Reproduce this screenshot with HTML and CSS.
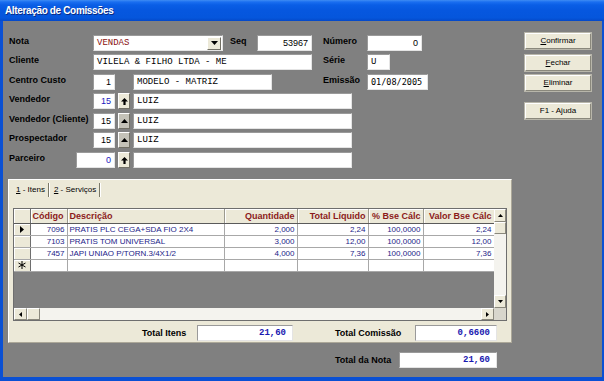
FILE: index.html
```html
<!DOCTYPE html>
<html>
<head>
<meta charset="utf-8">
<title>Alteração de Comissões</title>
<link rel="stylesheet" href="styles.css">
</head>
<body>
<div class="window">
  <div class="titlebar">Alteração de Comissões</div>
  <div class="client">
    <div class="top">
      <div class="fields">
        <div class="row">
          <span class="lbl w84">Nota</span>
          <div class="combo">
            <span class="ctext mono red">VENDAS</span>
            <span class="ddbtn"><svg width="7" height="4" viewBox="0 0 7 4"><path d="M0 0H7L3.5 4Z" fill="#000"/></svg></span>
          </div>
          <span class="lbl seqlbl">Seq</span>
          <div class="inp w55 right sans">53967</div>
          <span class="lbl rlbl">Número</span>
          <div class="inp w55 right sans">0</div>
        </div>
        <div class="row g3">
          <span class="lbl w84">Cliente</span>
          <div class="inp w219 mono">VILELA &amp; FILHO LTDA - ME</div>
          <span class="lbl rlbl">Série</span>
          <div class="inp w23 mono">U</div>
        </div>
        <div class="row g4">
          <span class="lbl w84">Centro Custo</span>
          <div class="inp w22 right sans">1</div>
          <div class="inp w139 mono ml18">MODELO - MATRIZ</div>
          <span class="lbl rlbl ml51">Emissão</span>
          <div class="inp w61 dmono">01/08/2005</div>
        </div>
        <div class="row g3">
          <span class="lbl w84">Vendedor</span>
          <div class="inp w22 right sans blue">15</div>
          <span class="sbtn"><svg width="7" height="7" viewBox="0 0 7 7"><path d="M3.5 0L7 3.5H4.6V7H2.4V3.5H0Z" fill="#000"/></svg></span>
          <div class="inp w219 mono">LUIZ</div>
        </div>
        <div class="row g4">
          <span class="lbl w84">Vendedor (Cliente)</span>
          <div class="inp w22 right sans">15</div>
          <span class="sbtn gray"><svg width="7" height="4" viewBox="0 0 7 4"><path d="M3.5 0L7 4H0Z" fill="#000"/></svg></span>
          <div class="inp w219 mono">LUIZ</div>
        </div>
        <div class="row g3">
          <span class="lbl w84">Prospectador</span>
          <div class="inp w22 right sans">15</div>
          <span class="sbtn gray"><svg width="7" height="4" viewBox="0 0 7 4"><path d="M3.5 0L7 4H0Z" fill="#000"/></svg></span>
          <div class="inp w219 mono">LUIZ</div>
        </div>
        <div class="row g4">
          <span class="lbl w67">Parceiro</span>
          <div class="inp w39 right sans blue">0</div>
          <span class="sbtn"><svg width="7" height="7" viewBox="0 0 7 7"><path d="M3.5 0L7 3.5H4.6V7H2.4V3.5H0Z" fill="#000"/></svg></span>
          <div class="inp w219 mono"></div>
        </div>
      </div>
      <div class="buttons">
        <button class="btn"><u>C</u>onfirmar</button>
        <button class="btn b2"><u>F</u>echar</button>
        <button class="btn b3"><u>E</u>liminar</button>
        <button class="btn b4">F1 - Ajuda</button>
      </div>
    </div>

    <div class="panel">
      <div class="tabs">
        <span class="tab"><u>1</u> - Itens</span>
        <span class="tab"><u>2</u> - Serviços</span>
      </div>
      <div class="dgrid">
        <div class="data">
          <table class="tbl">
            <colgroup>
              <col class="c0"><col class="c1"><col class="c2"><col class="c3"><col class="c4"><col class="c5"><col class="c6">
            </colgroup>
            <thead>
              <tr>
                <th class="ind"></th>
                <th class="l">Código</th>
                <th class="l">Descrição</th>
                <th>Quantidade</th>
                <th>Total Líquido</th>
                <th>% Bse Cálc</th>
                <th>Valor Bse Cálc</th>
              </tr>
            </thead>
            <tbody>
              <tr>
                <td class="ind"><svg width="4" height="7" viewBox="0 0 4 7"><path d="M0 0L4 3.5L0 7Z" fill="#000"/></svg></td>
                <td class="r">7096</td><td>PRATIS PLC CEGA+SDA FIO 2X4</td><td class="r">2,000</td><td class="r">2,24</td><td class="r">100,0000</td><td class="r">2,24</td>
              </tr>
              <tr>
                <td class="ind"></td>
                <td class="r">7103</td><td>PRATIS TOM UNIVERSAL</td><td class="r">3,000</td><td class="r">12,00</td><td class="r">100,0000</td><td class="r">12,00</td>
              </tr>
              <tr>
                <td class="ind"></td>
                <td class="r">7457</td><td>JAPI UNIAO P/TORN.3/4X1/2</td><td class="r">4,000</td><td class="r">7,36</td><td class="r">100,0000</td><td class="r">7,36</td>
              </tr>
              <tr>
                <td class="ind"><svg width="8" height="8" viewBox="0 0 8 8"><path d="M4 0V8M0.5 2L7.5 6M0.5 6L7.5 2" stroke="#000" stroke-width="1"/></svg></td>
                <td></td><td></td><td></td><td></td><td></td><td></td>
              </tr>
            </tbody>
          </table>
        </div>
        <div class="vscroll">
          <span class="sb-arrow"><svg width="5" height="3" viewBox="0 0 5 3"><path d="M2.5 0L5 3H0Z" fill="#000"/></svg></span>
          <span class="sb-thumb"></span>
          <span class="sb-track"></span>
          <span class="sb-arrow"><svg width="5" height="3" viewBox="0 0 5 3"><path d="M0 0H5L2.5 3Z" fill="#000"/></svg></span>
        </div>
        <div class="hscroll">
          <span class="sb-arrow"><svg width="3" height="5" viewBox="0 0 3 5"><path d="M3 0V5L0 2.5Z" fill="#000"/></svg></span>
          <span class="sb-thumb"></span>
          <span class="sb-track"></span>
          <span class="sb-arrow"><svg width="3" height="5" viewBox="0 0 3 5"><path d="M0 0L3 2.5L0 5Z" fill="#000"/></svg></span>
        </div>
        <div class="corner"></div>
      </div>
      <div class="totals">
        <span class="lbl tl1">Total Itens</span>
        <div class="inp tot w96">21,60</div>
        <span class="lbl tl2">Total Comissão</span>
        <div class="inp tot w82">0,6600</div>
      </div>
    </div>

    <div class="bottom">
      <span class="lbl tl3">Total da Nota</span>
      <div class="inp tot w98">21,60</div>
    </div>
  </div>
</div>
</body>
</html>
```

FILE: styles.css
```css
* { box-sizing: border-box; }
html, body { margin: 0; padding: 0; }
body {
  width: 604px;
  height: 381px;
  overflow: hidden;
  background: #0b4fd2;
  font-family: "Liberation Sans", Arial, sans-serif;
  font-size: 9px;
  color: #000;
}
.window {
  width: 604px;
  height: 381px;
  display: flex;
  flex-direction: column;
  background: #0a50d4;
}
.titlebar {
  flex: none;
  height: 21px;
  padding-left: 5px;
  color: #fff;
  font-weight: bold;
  font-size: 10px;
  letter-spacing: -0.35px;
  line-height: 21px;
  text-shadow: 1px 1px 0 #0a2a80;
  background: linear-gradient(#3f8cf3 0, #1a6ef0 2px, #0a5ee6 5px, #0657df 50%, #0556dc 85%, #0448c8 100%);
}
.client {
  flex: 1;
  margin: 0 2px 4px 3px;
  background: #808080;
  display: flex;
  flex-direction: column;
  padding-top: 14px;
}
.top {
  display: flex;
  height: 133px;
}
.fields {
  padding-left: 6px;
}
.row {
  display: flex;
  height: 16px;
  align-items: flex-start;
}
.row.g3 { margin-top: 3px; }
.row.g4 { margin-top: 4px; }
.lbl {
  font-weight: bold;
  font-size: 9px;
  line-height: 12px;
  color: #000;
  white-space: nowrap;
  flex: none;
}
.w84 { width: 84px; }
.w67 { width: 67px; }
.seqlbl { margin-left: 7px; width: 27px; }
.rlbl { margin-left: 11px; width: 44px; }
.ml51 { margin-left: 51px; }
.ml18 { margin-left: 18px; }

.inp {
  flex: none;
  height: 16px;
  background: #fff;
  border-top: 1px solid #9a9a9a;
  border-left: 1px solid #9a9a9a;
  border-right: 1px solid #e4e4e4;
  border-bottom: 1px solid #e4e4e4;
  padding: 0 3px;
  line-height: 14px;
  white-space: nowrap;
  overflow: hidden;
}
.w22 { width: 22px; }
.w23 { width: 23px; }
.w39 { width: 39px; }
.w55 { width: 55px; }
.w61 { width: 61px; }
.w82 { width: 82px; }
.w96 { width: 96px; }
.w98 { width: 98px; }
.w139 { width: 139px; }
.w219 { width: 219px; }
.right { text-align: right; }
.mono { font-family: "Liberation Mono", "Courier New", monospace; font-size: 9px; }
.dmono { font-family: "DejaVu Sans Mono", monospace; font-size: 8.5px; }
.sans { font-family: "Liberation Sans", Arial, sans-serif; font-size: 9px; }
.red { color: #8a1010; }
.blue { color: #1a1ac0; }

.combo {
  flex: none;
  width: 130px;
  height: 16px;
  background: #fff;
  border-top: 1px solid #9a9a9a;
  border-left: 1px solid #9a9a9a;
  border-right: 1px solid #e4e4e4;
  border-bottom: 1px solid #e4e4e4;
  display: flex;
  align-items: center;
}
.ctext { flex: 1; padding-left: 3px; line-height: 14px; }
.ddbtn {
  width: 14px;
  height: 13px;
  margin-right: 1px;
  background: #ece9d8;
  border-top: 1px solid #fff;
  border-left: 1px solid #fff;
  border-right: 1px solid #716f64;
  border-bottom: 1px solid #716f64;
  display: flex;
  align-items: center;
  justify-content: center;
}
.sbtn {
  flex: none;
  width: 12px;
  height: 16px;
  margin: 0 3px;
  background: #ece9d8;
  border-top: 1px solid #fff;
  border-left: 1px solid #fff;
  border-right: 1px solid #716f64;
  border-bottom: 1px solid #716f64;
  display: flex;
  align-items: center;
  justify-content: center;
}
.sbtn.gray { background: #c4c2b8; }

.buttons {
  margin-left: auto;
  margin-right: 11px;
  margin-top: -2px;
  display: flex;
  flex-direction: column;
}
.btn {
  width: 66px;
  height: 16px;
  padding: 0;
  margin: 0;
  font-family: "Liberation Sans", Arial, sans-serif;
  font-size: 8px;
  color: #000;
  background: #ece9d8;
  border-top: 1px solid #fff;
  border-left: 1px solid #fff;
  border-right: 1px solid #8a887c;
  border-bottom: 1px solid #8a887c;
  box-shadow: 0 0 0 1px #b8b6aa;
  line-height: 14px;
}
.b2 { margin-top: 6px; }
.b3 { margin-top: 4px; }
.b4 { margin-top: 12px; }

.panel {
  margin: 11px 0 0 5px;
  width: 504px;
  height: 164px;
  background: #ece9d8;
  border-top: 1px solid #fff;
  border-left: 1px solid #fff;
  border-right: 1px solid #aca899;
  border-bottom: 1px solid #aca899;
  padding: 3px 4px 0 4px;
}
.tabs {
  display: flex;
  height: 14px;
  padding-left: 2px;
  font-size: 8px;
  line-height: 14px;
}
.tab {
  padding: 0 3px 0 1px;
  border-right: 1px solid #7a7868;
  box-shadow: 1px 0 0 #fff;
  margin-right: 4px;
}
.dgrid {
  margin-top: 11px;
  width: 494px;
  height: 113px;
  border: 1px solid #6e6e6e;
  display: grid;
  grid-template-columns: 480px 12px;
  grid-template-rows: 99px 12px;
  background: #808080;
}
.data { overflow: hidden; background: #808080; }
.tbl {
  border-collapse: collapse;
  table-layout: fixed;
  width: 480px;
  font-size: 8px;
  color: #1c1c88;
}
.c0 { width: 16px; }
.c1 { width: 37px; }
.c2 { width: 157px; }
.c3 { width: 73px; }
.c4 { width: 71px; }
.c5 { width: 55px; }
.c6 { width: 71px; }
.tbl th {
  height: 14px;
  padding: 0 2px;
  background: #ece9d8;
  color: #8b1a1a;
  font-weight: bold;
  font-size: 9px;
  text-align: right;
  white-space: nowrap;
  overflow: hidden;
  border-right: 1px solid #9c9a8e;
  border-bottom: 1px solid #5a5a5a;
  box-shadow: inset 1px 1px 0 #fff;
}
.tbl th.l { text-align: left; }
.tbl td {
  height: 12px;
  padding: 0 2px;
  background: #fff;
  white-space: nowrap;
  overflow: hidden;
  line-height: 11px;
  border-right: 1px solid #a8a8a8;
  border-bottom: 1px solid #a8a8a8;
}
.tbl td.r { text-align: right; }
.tbl .ind {
  background: #ece9d8;
  padding: 0;
  text-align: center;
  border-right: 1px solid #6e6e6e;
  box-shadow: inset 1px 1px 0 #fff;
}
.tbl td.ind svg { display: block; margin: 0 auto; }

.vscroll {
  display: flex;
  flex-direction: column;
  background: #f4f3ee;
}
.hscroll {
  display: flex;
  background: #f4f3ee;
}
.sb-arrow {
  flex: none;
  width: 12px;
  height: 12px;
  background: #ece9d8;
  border-top: 1px solid #fff;
  border-left: 1px solid #fff;
  border-right: 1px solid #8a887c;
  border-bottom: 1px solid #8a887c;
  display: flex;
  align-items: center;
  justify-content: center;
}
.vscroll .sb-arrow { width: 12px; height: 13px; }
.hscroll .sb-arrow { width: 13px; height: 12px; }
.sb-thumb {
  flex: none;
  width: 12px;
  height: 12px;
  background: #ece9d8;
  border-top: 1px solid #fff;
  border-left: 1px solid #fff;
  border-right: 1px solid #8a887c;
  border-bottom: 1px solid #8a887c;
}
.hscroll .sb-thumb { width: 13px; }
.sb-track { flex: 1; }
.corner { background: #d8d6cc; }

.totals {
  display: flex;
  margin-top: 4px;
  height: 16px;
  align-items: center;
}
.tl1 { margin-left: 129px; width: 55px; }
.tl2 { margin-left: 42px; width: 80px; }
.tot {
  font-family: "Liberation Mono", "Courier New", monospace;
  font-weight: bold;
  font-size: 9px;
  color: #1818b0;
  text-align: right;
  padding-right: 6px;
}
.bottom {
  display: flex;
  margin-top: 9px;
  height: 16px;
  align-items: center;
}
.tl3 { margin-left: 332px; width: 64px; }
```
